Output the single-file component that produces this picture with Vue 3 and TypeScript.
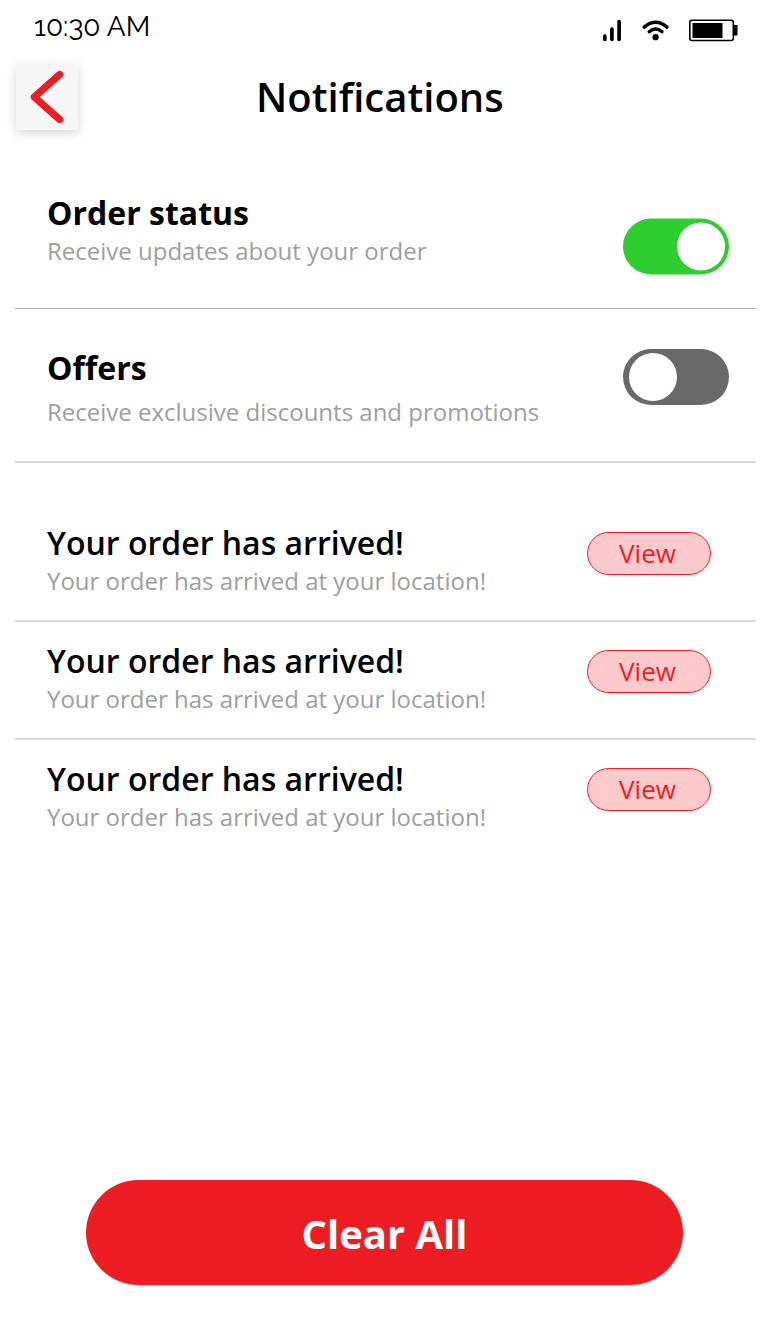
<script setup lang="ts">
import { ref } from 'vue'

interface Preference { title: string; detail: string; on: boolean }
const preferences = ref<Preference[]>([
  { title: 'Order status', detail: 'Receive updates about your order', on: true },
  { title: 'Offers', detail: 'Receive exclusive discounts and promotions', on: false },
])
const messages = ref([1, 2, 3])
</script>

<template>
  <main class="screen">
    <div class="status">
      <time>10:30 AM</time>
      <svg width="140" height="30" viewBox="600 15 140 30" aria-hidden="true">
        <path d="M604.8 36v3.300M611.900 29v10.300M619.100 21.700v17.600" fill="none" stroke="#000" stroke-width="3.700" stroke-linecap="round" />
        <g fill="none" stroke="#000" stroke-width="3.400" stroke-linecap="round"><path d="M644.200 27.100q11.400-9.800 22.800 0M649.200 31.700q6.400-5.400 12.800 0" /></g>
        <circle cx="655.600" cy="37.200" r="3.100" />
        <rect x="689.800" y="20.300" width="43.500" height="20.200" rx="2" fill="none" stroke="#000" stroke-width="1.600" />
        <path d="M692.500 23h30v15h-30zM734 25h3.500v10.500H734z" />
      </svg>
    </div>
    <header>
      <button class="back" aria-label="Back">
        <svg width="62" height="67" viewBox="0 0 62 67"><path d="M43.700 11.500 18.300 34l25.400 22.500" fill="none" stroke="#ee1d23" stroke-width="7.200" stroke-linecap="round" stroke-linejoin="round" /></svg>
      </button>
      <h1>Notifications</h1>
    </header>
    <section v-for="(p, i) in preferences" :key="p.title" class="preference" :class="{ second: i === 1 }">
      <div><h2>{{ p.title }}</h2><p>{{ p.detail }}</p></div>
      <button class="switch" :class="{ on: p.on }" role="switch" :aria-checked="p.on" :aria-label="p.title" @click="p.on = !p.on">
        <svg width="106" height="56" viewBox="0 0 106 56"><rect width="106" height="56" rx="28" /><circle :cx="p.on ? 78 : 30" cy="28" r="24" fill="#fff" /></svg>
      </button>
    </section>
    <div class="messages">
      <article v-for="m in messages" :key="m">
        <div><h3>Your order has arrived!</h3><p>Your order has arrived at your location!</p></div>
        <button class="view">View</button>
      </article>
    </div>
    <button class="clear" @click="messages = []">Clear All</button>
  </main>
</template>

<style>
body { background: #fff; }
</style>
<style scoped>
* { box-sizing: border-box; margin: 0; }
button { border: 0; padding: 0; font-family: inherit; }
.screen { width: 769px; height: 1334px; display: flex; flex-direction: column; font-family: "Open Sans", sans-serif; color: #000; overflow: hidden; }
.status { height: 63px; padding: 0 29px 0 34px; display: flex; justify-content: space-between; }
time { font: 400 28px/34px Raleway, Lato, sans-serif; padding-top: 10px; white-space: nowrap; }
.status svg { margin-top: 15px; }
header { height: 92px; display: grid; grid-template-columns: 78px 1fr; padding-left: 16px; }
.back { width: 62px; height: 67px; background: #f7f7f7; box-shadow: 0 3px 10px rgba(0,0,0,.16); }
.back svg { display: block; }
h1 { font-size: 40px; line-height: 54px; font-weight: 600; margin: 7px 0 0 162px; }
h2, h3 { font-size: 32px; line-height: 44px; white-space: nowrap; }
h2 { font-weight: 700; }
h3 { font-weight: 600; }
p { font-size: 24px; line-height: 33px; margin-top: -1px; color: #9e9e9e; white-space: nowrap; }
.preference { height: 154px; margin: 0 13px 0 15px; padding: 36px 27px 0 32px; border-bottom: 1px solid #b2b2b2; display: flex; justify-content: space-between; }
.preference.second { padding-top: 37px; border-bottom: 2px solid #d8d8d8; }
.second p { margin-top: 5px; }
.switch { width: 106px; height: 56px; background: none; color: #696969; margin-top: 28px; }
.switch svg { display: block; overflow: visible; }
.switch rect { fill: currentColor; }
.switch.on { color: #2dce2d; }
.switch.on svg { transform: translateY(-.5px); }
.second .switch { margin-top: 3px; }
.messages { padding-top: 41px; margin: 0 13px 0 15px; }
article { height: 118px; padding: 17px 45px 0 32px; display: flex; justify-content: space-between; }
article:not(:last-child) { border-bottom: 2px solid #d8d8d8; }
.view { width: 124px; height: 43px; margin-top: 11px; padding: 0 3px 2px 0; border: 1px solid #ee1d23; border-radius: 22px; background: #ffcacb; color: #ee1d23; font-size: 26px; font-weight: 400; }
.clear { width: 597px; height: 105px; margin: auto 0 49px 86px; padding-top: 2px; border-radius: 53px; background: #ee1d23; color: #fff; font-size: 40px; font-weight: 700; }
</style>
